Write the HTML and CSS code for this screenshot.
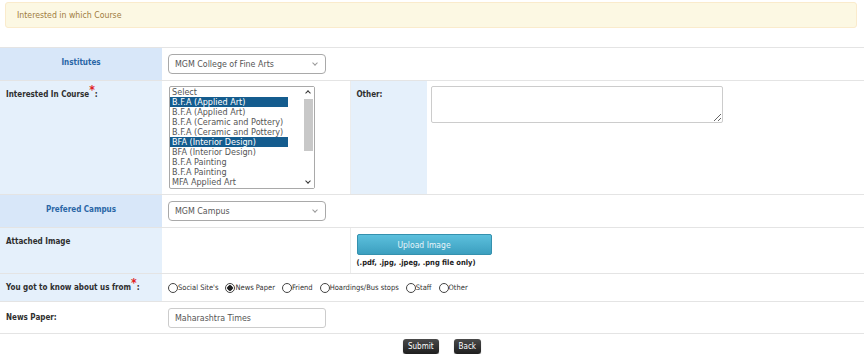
FILE: index.html
```html
<!DOCTYPE html>
<html lang="en">

<head>
    <meta charset="UTF-8">
    <title>Admission Enquiry</title>
    <link rel="stylesheet" href="styles.css">
</head>

<body>
    <div class="alert">Interested in which Course</div>

    <table class="form-table">
        <colgroup>
            <col class="c-label">
            <col class="c-field">
            <col class="c-label2">
            <col>
        </colgroup>

        <!-- Institute -->
        <tr class="r-select">
            <td class="lbl lbl-head">Institutes</td>
            <td colspan="3">
                <div class="select-box">MGM College of Fine Arts<span class="chev"></span></div>
            </td>
        </tr>

        <!-- Course -->
        <tr class="r-course">
            <td class="lbl top">Interested In Course<span class="req">*</span>:</td>
            <td class="top">
                <div class="list-wrap">
                    <select class="course-list" multiple size="10">
                        <option>Select</option>
                        <option selected>B.F.A (Applied Art)</option>
                        <option>B.F.A (Applied Art)</option>
                        <option>B.F.A (Ceramic and Pottery)</option>
                        <option>B.F.A (Ceramic and Pottery)</option>
                        <option selected>BFA (Interior Design)</option>
                        <option>BFA (Interior Design)</option>
                        <option>B.F.A Painting</option>
                        <option>B.F.A Painting</option>
                        <option>MFA Applied Art</option>
                        <option>MFA Applied Art</option>
                        <option>MFA Painting</option>
                        <option>MFA Painting</option>
                        <option>Foundation Course</option>
                        <option>Foundation Course</option>
                        <option>Diploma in Art Education</option>
                    </select>
                    <div class="fake-scroll">
                        <span class="arr arr-up"></span>
                        <span class="track"><span class="thumb"></span></span>
                        <span class="arr arr-down"></span>
                    </div>
                </div>
            </td>
            <td class="lbl top split">Other:</td>
            <td class="top">
                <textarea class="other-box"></textarea>
            </td>
        </tr>

        <!-- Campus -->
        <tr class="r-select">
            <td class="lbl lbl-head">Prefered Campus</td>
            <td colspan="3">
                <div class="select-box">MGM Campus<span class="chev"></span></div>
            </td>
        </tr>

        <!-- Image -->
        <tr class="r-image">
            <td class="lbl top">Attached Image</td>
            <td></td>
            <td colspan="2" class="top split">
                <button class="btn-upload">Upload Image</button>
                <div class="hint">(.pdf, .jpg, .jpeg, .png file only)</div>
            </td>
        </tr>

        <!-- Source -->
        <tr class="r-radio">
            <td class="lbl">You got to know about us from<span class="req">*</span>:</td>
            <td colspan="3">
                <div class="radios">
                    <label><input type="radio" name="src">Social Site's</label>
                    <label><input type="radio" name="src" checked>News Paper</label>
                    <label><input type="radio" name="src">Friend</label>
                    <label><input type="radio" name="src">Hoardings/Bus stops</label>
                    <label><input type="radio" name="src">Staff</label>
                    <label><input type="radio" name="src">Other</label>
                </div>
            </td>
        </tr>

        <!-- Paper name -->
        <tr class="r-text plain">
            <td class="lbl">News Paper:</td>
            <td colspan="3">
                <input type="text" class="text-box" value="Maharashtra Times">
            </td>
        </tr>
    </table>

    <div class="actions">
        <button class="btn-dark">Submit</button>
        <button class="btn-dark">Back</button>
    </div>
</body>

</html>
```

FILE: styles.css
```css
body {
    margin: 0;
    font-family: "DejaVu Sans Condensed", "DejaVu Sans", sans-serif;
    font-size: 8px;
    color: #333;
    background: #fff;
}

.alert {
    margin: 2px 7px 0 5px;
    height: 26px;
    box-sizing: border-box;
    padding: 0 11px;
    line-height: 25px;
    background: #fcf8e3;
    border: 1px solid #faebcc;
    border-radius: 3px;
    color: #a07c3e;
    font-size: 8.7px;
}

.form-table {
    width: 100%;
    margin-top: 19px;
    border-collapse: collapse;
}

.c-label { width: 162px; }
.c-field { width: 188px; }
.c-label2 { width: 77px; }

.r-select { height: 33px; }
.r-course { height: 114px; }
.r-image { height: 46px; }
.r-radio { height: 28px; }
.r-text { height: 32px; }

.form-table td {
    padding: 0 6px;
    border-top: 1px solid #e4e4e4;
    border-bottom: 1px solid #e4e4e4;
    vertical-align: middle;
}

.form-table td.top {
    vertical-align: top;
    padding-top: 5px;
}

.form-table td.split {
    border-left: 1px solid #ececec;
}

.lbl {
    background: #e5f0fb;
    font-weight: bold;
    color: #2e2e2e;
}

.form-table td.lbl.top {
    padding-top: 9px;
}

.lbl-head {
    background: #d8e7f9;
    color: #2a66a6;
    text-align: center;
    padding-bottom: 3px !important;
}

.plain .lbl {
    background: #fff;
}

.req {
    color: #e02020;
    font-size: 12px;
    position: relative;
    top: -3px;
    line-height: 0;
}

.select-box {
    position: relative;
    width: 158px;
    height: 20px;
    box-sizing: border-box;
    padding-left: 6px;
    line-height: 18px;
    border: 1px solid #a9a9a9;
    border-radius: 4px;
    color: #555;
    font-size: 8.8px;
}

.chev {
    position: absolute;
    right: 8px;
    top: 6px;
    width: 3px;
    height: 3px;
    border-right: 1px solid #999;
    border-bottom: 1px solid #999;
    transform: rotate(45deg);
}

.list-wrap {
    position: relative;
    width: 146px;
    margin-left: 1px;
}

.course-list {
    display: block;
    width: 146px;
    height: 103px;
    margin: 0;
    padding: 0;
    border: 1px solid #a9a9a9;
    border-radius: 2px;
    font-family: inherit;
    font-size: 9px;
    color: #555;
    overflow: hidden;
}

.course-list option {
    height: 10px;
    line-height: 10px;
    padding: 0 2px;
    min-height: 0;
}

.course-list option:checked {
    background: linear-gradient(to right, #145c8e 118px, transparent 118px);
    color: #fff;
}

.fake-scroll {
    position: absolute;
    top: 1px;
    right: 1px;
    bottom: 1px;
    width: 11px;
    display: flex;
    flex-direction: column;
    background: #fff;
}

.arr {
    position: relative;
    height: 11px;
}

.arr::after {
    content: "";
    position: absolute;
    left: 3px;
    width: 3px;
    height: 3px;
    border-left: 1px solid #333;
    border-top: 1px solid #333;
}

.arr-up::after {
    top: 4px;
    transform: rotate(45deg);
}

.arr-down::after {
    top: 2px;
    transform: rotate(-135deg);
}

.track {
    flex: 1;
    padding: 1px 1px 0;
}

.thumb {
    display: block;
    height: 52px;
    background: #c8c8c8;
}

.other-box {
    display: block;
    width: 292px;
    height: 37px;
    margin-left: -2px;
    box-sizing: border-box;
    border: 1px solid #ccc;
    border-radius: 2px;
}

.btn-upload {
    display: block;
    width: 135px;
    height: 21px;
    margin-top: 1px;
    border: 1px solid #3591ae;
    border-radius: 2px;
    background: linear-gradient(#5cc0dd, #3c9fbf);
    color: #e6f4f9;
    font-family: inherit;
    font-size: 8.5px;
}

.hint {
    margin: 3px 0 0;
    font-weight: bold;
    font-size: 7.5px;
    color: #222;
}

.radios {
    display: flex;
    gap: 7px;
    align-items: center;
    font-size: 7.5px;
    color: #333;
}

.radios label {
    display: flex;
    align-items: center;
}

.radios input {
    appearance: none;
    width: 10px;
    height: 10px;
    margin: 0;
    border: 1px solid #444;
    border-radius: 50%;
    background: #fff;
}

.radios input:checked {
    background: radial-gradient(circle, #222 0 2.5px, #fff 3px);
}

.text-box {
    display: block;
    width: 158px;
    height: 20px;
    box-sizing: border-box;
    padding: 0 6px;
    border: 1px solid #ccc;
    border-radius: 3px;
    font-family: inherit;
    font-size: 8.8px;
    color: #555;
}

.actions {
    display: flex;
    justify-content: center;
    gap: 15px;
    padding: 5px 0 0 20px;
}

.btn-dark {
    height: 15px;
    padding: 0 5px;
    border: none;
    border-radius: 3px;
    background: linear-gradient(#4a4a4a, #1e1e1e);
    box-shadow: 0 1px 1px rgba(0, 0, 0, 0.4);
    color: #fff;
    font-family: inherit;
    font-size: 8px;
}
```
